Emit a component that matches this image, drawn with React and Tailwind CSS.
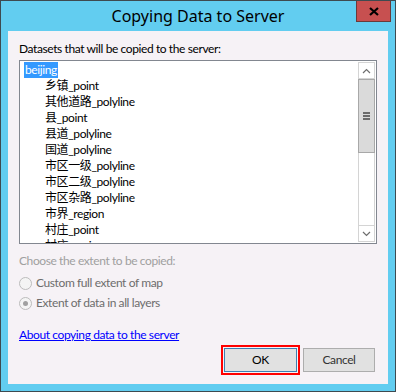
import React from "react";

const items = [
  "乡镇_point",
  "其他道路_polyline",
  "县_point",
  "县道_polyline",
  "国道_polyline",
  "市区一级_polyline",
  "市区二级_polyline",
  "市区杂路_polyline",
  "市界_region",
  "村庄_point",
  "村庄_region",
];

const font = { fontFamily: 'Lato, "Noto Sans CJK SC", sans-serif' };
const titleFont = { fontFamily: '"Noto Sans", sans-serif' };

function Radio({ checked }) {
  return (
    <span className="w-[13px] h-[13px] rounded-full border border-[#bcbcbc] bg-[#f4f4f4] flex items-center justify-center shrink-0">
      {checked && <span className="w-[5px] h-[5px] rounded-full bg-[#a0a0a0]" />}
    </span>
  );
}

export default function App() {
  return (
    <div
      className="w-[396px] h-[392px] bg-[#62cdf0] border border-[#3e4a50] flex flex-col relative overflow-hidden"
      style={font}
    >
      <div className="h-[30px] flex items-center justify-center text-[16px] text-black" style={titleFont}>
        Copying Data to Server
      </div>
      <div className="absolute top-0 right-[4px] w-[35px] h-[21px] bg-[#c75050] border border-t-0 border-[#6b3a3a] flex items-center justify-center">
        <svg width="10" height="9" viewBox="0 0 10 9">
          <path d="M1 1 L9 8 M9 1 L1 8" stroke="#000" strokeWidth="2.2" />
        </svg>
      </div>
      <div className="mx-[7px] mb-[7px] flex-1 bg-[#f6f2f6] flex flex-col px-[11px] pt-[10px] text-[12px] tracking-[-0.4px] text-black">
        <div className="h-[16px] leading-[16px]">Datasets that will be copied to the server:</div>
        <div className="mt-[3px] h-[184px] border border-[#828790] bg-white flex overflow-hidden">
          <div className="flex-1 pl-[4px] pt-[1px] overflow-hidden">
            <div className="h-[16px] leading-[16px] flex">
              <span className="bg-[#3399ff] text-white px-[1px]">beijing</span>
            </div>
            {items.map((t) => (
              <div key={t} className="h-[16px] leading-[16px] pl-[21px] whitespace-nowrap">
                {t}
              </div>
            ))}
          </div>
          <div className="w-[17px] mr-[1px] mt-[1px] mb-[1px] flex flex-col bg-white border-x border-[#d4d4d4]">
            <div className="h-[17px] border border-x-0 border-[#d4d4d4] flex items-center justify-center">
              <svg width="9" height="6" viewBox="0 0 9 6">
                <path d="M1 5 L4.5 1.5 L8 5" stroke="#6d6d6d" strokeWidth="1.2" fill="none" />
              </svg>
            </div>
            <div className="h-[74px] bg-[#dadada] border border-[#a8a8a8] -mx-[1px] flex flex-col items-center justify-center gap-[1px]">
              <span className="w-[7px] h-[2px] bg-[#6b6b6b]" />
              <span className="w-[7px] h-[2px] bg-[#6b6b6b]" />
              <span className="w-[7px] h-[2px] bg-[#6b6b6b]" />
            </div>
            <div className="flex-1" />
            <div className="h-[17px] border border-x-0 border-[#d4d4d4] flex items-center justify-center">
              <svg width="9" height="6" viewBox="0 0 9 6">
                <path d="M1 1 L4.5 4.5 L8 1" stroke="#6d6d6d" strokeWidth="1.2" fill="none" />
              </svg>
            </div>
          </div>
        </div>
        <div className="mt-[9px] h-[16px] leading-[16px] text-[#a0a0a0]">Choose the extent to be copied:</div>
        <div className="mt-[6px] h-[16px] flex items-center gap-[4px] text-[#6d6d6d]">
          <Radio />
          <span>Custom full extent of map</span>
        </div>
        <div className="mt-[4px] h-[16px] flex items-center gap-[4px] text-[#6d6d6d]">
          <Radio checked />
          <span>Extent of data in all layers</span>
        </div>
        <div className="mt-[16px] h-[16px] leading-[16px]">
          <span className="text-[#0000ff] underline">About copying data to the server</span>
        </div>
        <div className="mt-[5px] flex justify-end gap-[6px] mr-[2px]">
          <button className="w-[73px] h-[24px] bg-[#e1e1e1] border border-[#3c7fb1] outline-2 outline-[#ff0000] outline-offset-1 text-black text-[12px]">
            OK
          </button>
          <button className="w-[72px] h-[24px] bg-[#e1e1e1] border border-[#adadad] text-[#333] text-[12px]">
            Cancel
          </button>
        </div>
      </div>
    </div>
  );
}
